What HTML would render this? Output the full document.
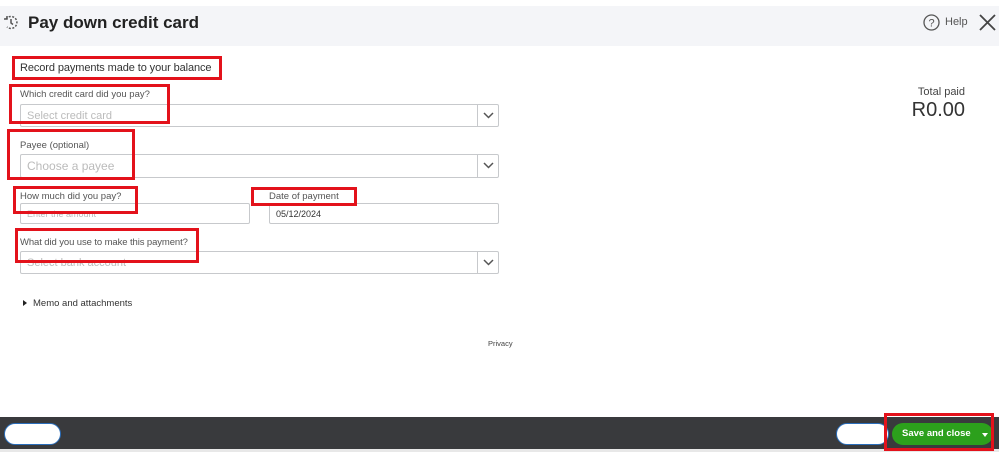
<!DOCTYPE html>
<html><head><style>
*{box-sizing:border-box;margin:0;padding:0}
body{width:999px;height:452px;background:#fff;position:relative;overflow:hidden;font-family:"Liberation Sans",sans-serif;color:#393a3d}
.a{position:absolute}
.rb{position:absolute;border:3px solid #e3121b}
.lbl{position:absolute;font-size:9.5px;color:#555}
.inp{position:absolute;border:1px solid #c7c9cc;border-radius:2px;background:#fff;font-size:11px;color:#bbb;padding-left:6px}
.dd{position:absolute;right:0;top:0;bottom:0;width:21px;border-left:1px solid #c7c9cc}
</style></head><body>
<div class="a" style="left:0;top:6px;width:999px;height:40px;background:#f4f5f8"></div>
<svg class="a" style="left:3px;top:14px" width="16" height="16" viewBox="0 0 16 16" fill="none" stroke="#555" stroke-width="1.5"><path d="M3 5A6 6 0 1 1 4 13" stroke-dasharray="2 1.5"/><path d="M1 5h3V2"/><path d="M8 5v4l2 1.5"/></svg>
<div class="a" style="left:28px;top:13px;font-size:17px;font-weight:bold;color:#222">Pay down credit card</div>
<svg class="a" style="left:923px;top:14px" width="17" height="17" viewBox="0 0 17 17"><circle cx="8.5" cy="8.5" r="7.5" fill="none" stroke="#555" stroke-width="1.3"/><text x="8.5" y="12.5" font-size="11" text-anchor="middle" fill="#555" font-family="Liberation Sans">?</text></svg>
<div class="a" style="left:945px;top:16px;font-size:11px;color:#555">Help</div>
<svg class="a" style="left:979px;top:14px" width="17" height="17" viewBox="0 0 17 17" stroke="#444" stroke-width="1.8"><path d="M1 1L16 16M16 1L1 16"/></svg>

<div class="rb" style="left:12px;top:56px;width:210px;height:24px"></div>
<div class="a" style="left:20px;top:62px;font-size:11px;color:#333;letter-spacing:-0.1px">Record payments made to your balance</div>

<div class="lbl" style="left:20px;top:89px">Which credit card did you pay?</div>
<div class="inp" style="left:20px;top:104px;width:479px;height:23px;line-height:22px">Select credit card<div class="dd"><svg width="21" height="21" viewBox="0 0 21 21"><path d="M6 8l4.5 4.5L15 8" fill="none" stroke="#555" stroke-width="1.5"/></svg></div></div>
<div class="rb" style="left:9px;top:84px;width:161px;height:40px"></div>

<div class="lbl" style="left:20px;top:140px">Payee (optional)</div>
<div class="inp" style="left:20px;top:154px;width:479px;height:24px;line-height:23px;font-size:12px">Choose a payee<div class="dd"><svg width="21" height="22" viewBox="0 0 21 22"><path d="M6 8l4.5 4.5L15 8" fill="none" stroke="#555" stroke-width="1.5"/></svg></div></div>
<div class="rb" style="left:7px;top:129px;width:128px;height:51px"></div>

<div class="lbl" style="left:20px;top:191px">How much did you pay?</div>
<div class="inp" style="left:20px;top:203px;width:230px;height:21px;line-height:20px;font-size:9px">Enter the amount</div>
<div class="rb" style="left:13px;top:186px;width:125px;height:28px"></div>
<div class="lbl" style="left:269px;top:191px">Date of payment</div>
<div class="inp" style="left:269px;top:203px;width:230px;height:21px;line-height:20px;font-size:9px;color:#333">05/12/2024</div>
<div class="rb" style="left:251px;top:187px;width:106px;height:19px"></div>

<div class="lbl" style="left:20px;top:237px;letter-spacing:-0.1px">What did you use to make this payment?</div>
<div class="inp" style="left:20px;top:251px;width:479px;height:23px;line-height:22px">Select bank account<div class="dd"><svg width="21" height="21" viewBox="0 0 21 21"><path d="M6 8l4.5 4.5L15 8" fill="none" stroke="#555" stroke-width="1.5"/></svg></div></div>
<div class="rb" style="left:15px;top:228px;width:184px;height:35px"></div>

<div class="a" style="left:23px;top:300px;width:0;height:0;border-left:4px solid #222;border-top:3.5px solid transparent;border-bottom:3.5px solid transparent"></div>
<div class="a" style="left:33px;top:298px;font-size:9.5px;color:#333">Memo and attachments</div>
<div class="a" style="left:488px;top:339px;font-size:7.5px;color:#444">Privacy</div>

<div class="a" style="right:34px;top:86px;font-size:11px;color:#444">Total paid</div>
<div class="a" style="right:34px;top:99px;font-size:20px;color:#333">R0.00</div>

<div class="a" style="left:0;top:417px;width:999px;height:32px;background:#393a3d"></div>
<div class="a" style="left:0;top:449px;width:999px;height:3px;background:#e8e8e8"></div>
<div class="a" style="left:4px;top:423px;width:57px;height:22px;background:#fff;border:1px solid #2a6ebb;border-radius:11px"></div>
<div class="a" style="left:836px;top:423px;width:53px;height:22px;background:#fff;border:1px solid #2a6ebb;border-radius:11px"></div>
<div class="a" style="left:892px;top:423px;width:101px;height:22px;background:#2ca01c;border-radius:11px;color:#fff;font-size:9.5px;font-weight:bold;line-height:22px;padding-left:10px">Save and close</div>
<div class="a" style="left:982px;top:433px;width:0;height:0;border-top:4px solid #fff;border-left:3.5px solid transparent;border-right:3.5px solid transparent"></div>
<div class="rb" style="left:884px;top:413px;width:110px;height:38px"></div>
</body></html>
